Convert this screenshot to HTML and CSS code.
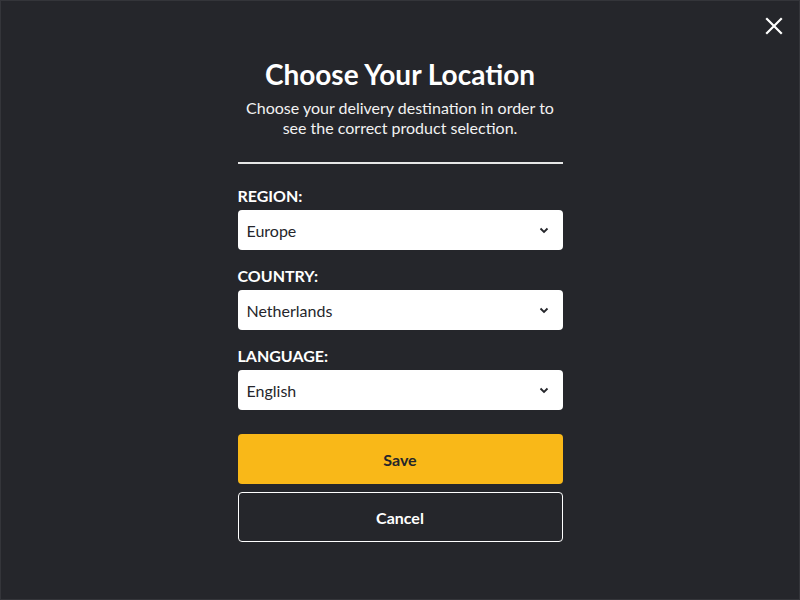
FILE: index.html
```html
<!DOCTYPE html>
<html lang="en">
<head>
<meta charset="utf-8">
<link rel="stylesheet" href="styles.css">
</head>
<body>
<div class="screen">
  <button class="close" aria-label="Close">
    <svg width="18" height="18" viewBox="0 0 18 18"><path d="M2 2 L16 16 M16 2 L2 16" stroke="#fff" stroke-width="2.2" stroke-linecap="square" fill="none"/></svg>
  </button>
  <div class="panel">
    <h1 class="title">Choose Your Location</h1>
    <p class="subtitle">Choose your delivery destination in order to see the correct product selection.</p>
    <div class="divider"></div>
    <div class="field">
      <div class="label">REGION:</div>
      <div class="select"><span>Europe</span><svg class="chev" width="10" height="7" viewBox="0 0 10 7"><path d="M1.5 1.5 L5 5 L8.5 1.5" stroke="#25262b" stroke-width="1.8" fill="none"/></svg></div>
    </div>
    <div class="field">
      <div class="label">COUNTRY:</div>
      <div class="select"><span>Netherlands</span><svg class="chev" width="10" height="7" viewBox="0 0 10 7"><path d="M1.5 1.5 L5 5 L8.5 1.5" stroke="#25262b" stroke-width="1.8" fill="none"/></svg></div>
    </div>
    <div class="field">
      <div class="label">LANGUAGE:</div>
      <div class="select"><span>English</span><svg class="chev" width="10" height="7" viewBox="0 0 10 7"><path d="M1.5 1.5 L5 5 L8.5 1.5" stroke="#25262b" stroke-width="1.8" fill="none"/></svg></div>
    </div>
    <div class="buttons">
      <button class="btn save">Save</button>
      <button class="btn cancel">Cancel</button>
    </div>
  </div>
</div>
</body>
</html>
```
FILE: styles.css
```css
* { box-sizing: border-box; }
html, body { margin: 0; padding: 0; }
body {
  width: 800px;
  height: 600px;
  background: #25262b;
  font-family: Lato, "Open Sans", sans-serif;
  color: #fff;
  overflow: hidden;
}
.screen {
  position: relative;
  width: 800px;
  height: 600px;
  border: 1px solid #34353a;
  display: flex;
  justify-content: center;
}
.close {
  position: absolute;
  top: 16px;
  right: 16px;
  width: 18px;
  height: 18px;
  padding: 0;
  border: 0;
  background: none;
  display: flex;
}
.panel {
  width: 325px;
  margin-top: 55px;
  display: flex;
  flex-direction: column;
}
.title {
  margin: 0;
  font-size: 28px;
  font-weight: 700;
  line-height: 36px;
  text-align: center;
}
.subtitle {
  margin: 6px 0 0;
  font-size: 16px;
  line-height: 20px;
  text-align: center;
  color: #f2f2f2;
}
.divider {
  height: 2px;
  background: #e6e6e6;
  margin-top: 24px;
  margin-bottom: 22px;
}
.field {
  display: flex;
  flex-direction: column;
  gap: 4px;
  margin-bottom: 16px;
}
.label {
  font-size: 16px;
  font-weight: 700;
  line-height: 20px;
}
.select {
  height: 40px;
  background: #fff;
  border-radius: 4px;
  color: #25262b;
  font-size: 16px;
  display: flex;
  align-items: center;
  justify-content: space-between;
  padding: 0 14px 0 9px;
}
.chev { display: block; }
.buttons {
  margin-top: 8px;
  display: flex;
  flex-direction: column;
  gap: 8px;
}
.btn {
  height: 50px;
  border-radius: 4px;
  font-family: Lato, "Open Sans", sans-serif;
  font-size: 16px;
  font-weight: 700;
  cursor: pointer;
}
.save {
  background: #f9b818;
  border: 0;
  color: #25262b;
}
.cancel {
  background: transparent;
  border: 1px solid #fff;
  color: #fff;
}
```
